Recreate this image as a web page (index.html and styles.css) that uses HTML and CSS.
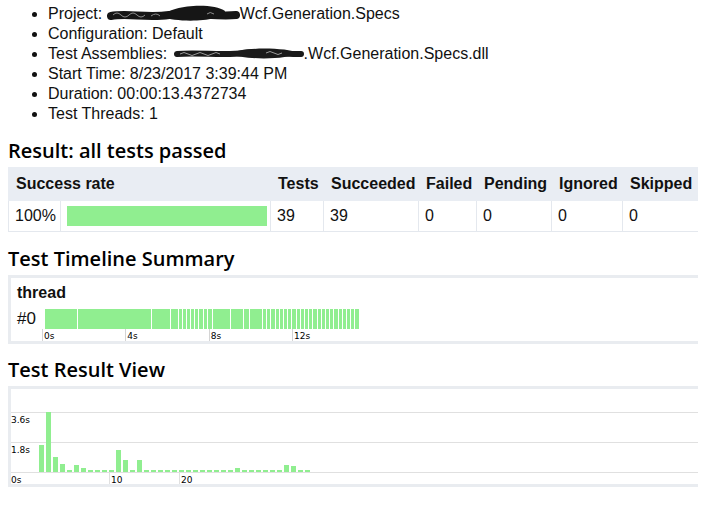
FILE: index.html
```html
<!DOCTYPE html>
<html lang="en">
<head>
<meta charset="utf-8">
<title>Test Report</title>
<link rel="stylesheet" href="styles.css">
</head>
<body>
<ul class="info">
  <li>Project: <svg class="redact" width="133" height="20" viewBox="0 0 133 20" aria-hidden="true"><path d="M4 12 C 20 9, 40 14, 62 11 S 110 13, 129 11" stroke="#161616" stroke-width="8" fill="none" stroke-linecap="round"/><path d="M56 13 C 60 1, 106 -2, 118 7 C 118 18, 70 19, 56 13 Z" fill="#161616"/><path d="M6 11 q4 -4 8 0 t8 0 t8 0 t8 0 M44 12 q5 -4 9 0 M100 10 q3 -3 7 0" stroke="#8c8c8c" stroke-width="1" fill="none"/></svg>Wcf.Generation.Specs</li>
  <li>Configuration: Default</li>
  <li>Test Assemblies: <svg class="redact r2" width="130" height="20" viewBox="0 0 130 20" aria-hidden="true"><path d="M3 10 C 25 8, 50 12, 70 9 S 110 11, 127 10" stroke="#1a1a1a" stroke-width="6" fill="none" stroke-linecap="round"/><path d="M56 10 C 64 3, 112 3, 124 9 C 114 16, 70 16, 56 10 Z" fill="#1a1a1a"/><path d="M6 10 q4 -3 8 0 t8 0 t8 0 t8 0 t8 0 M92 9 q4 -3 8 0 t8 0" stroke="#9a9a9a" stroke-width="1" fill="none"/></svg>.Wcf.Generation.Specs.dll</li>
  <li>Start Time: 8/23/2017 3:39:44 PM</li>
  <li>Duration: 00:00:13.4372734</li>
  <li>Test Threads: 1</li>
</ul>

<h2>Result: all tests passed</h2>
<table class="summary">
  <colgroup>
    <col class="c-rate"><col class="c-bar"><col class="c-tests"><col class="c-succ"><col class="c-fail"><col class="c-pend"><col class="c-ign"><col class="c-skip">
  </colgroup>
  <thead>
    <tr><th colspan="2">Success rate</th><th>Tests</th><th>Succeeded</th><th>Failed</th><th>Pending</th><th>Ignored</th><th>Skipped</th></tr>
  </thead>
  <tbody>
    <tr><td>100%</td><td><div class="rate-bar"></div></td><td>39</td><td>39</td><td>0</td><td>0</td><td>0</td><td>0</td></tr>
  </tbody>
</table>

<h2>Test Timeline Summary</h2>
<div class="panel timeline">
  <div class="thread-title">thread</div>
  <div class="thread-row">
    <span class="thread-id">#0</span>
    <div class="track">
      <span class="seg" style="width:33px"></span><span class="seg" style="width:74px"></span><span class="seg" style="width:19px"></span><span class="seg" style="width:8px"></span><span class="seg" style="width:4px"></span><span class="seg" style="width:4px"></span><span class="seg" style="width:4px"></span><span class="seg" style="width:4px"></span><span class="seg" style="width:4px"></span><span class="seg" style="width:5px"></span><span class="seg" style="width:4px"></span><span class="seg" style="width:5px"></span><span class="seg" style="width:18px"></span><span class="seg" style="width:13px"></span><span class="seg" style="width:6px"></span><span class="seg" style="width:13px"></span><span class="seg" style="width:4px"></span><span class="seg" style="width:4px"></span><span class="seg" style="width:5px"></span><span class="seg" style="width:4px"></span><span class="seg" style="width:4px"></span><span class="seg" style="width:4px"></span><span class="seg" style="width:4px"></span><span class="seg" style="width:5px"></span><span class="seg" style="width:4px"></span><span class="seg" style="width:4px"></span><span class="seg" style="width:4px"></span><span class="seg" style="width:4px"></span><span class="seg" style="width:5px"></span><span class="seg" style="width:4px"></span><span class="seg" style="width:4px"></span><span class="seg" style="width:4px"></span><span class="seg" style="width:4px"></span><span class="seg" style="width:5px"></span><span class="seg" style="width:4px"></span><span class="seg" style="width:4px"></span><span class="seg" style="width:4px"></span><span class="seg" style="width:4px"></span><span class="seg" style="width:4px"></span>
    </div>
  </div>
  <div class="tl-axis">
    <span class="tick">0s</span><span class="tick">4s</span><span class="tick">8s</span><span class="tick">12s</span>
  </div>
</div>

<h2 class="h-chart">Test Result View</h2>
<div class="panel chart">
  <div class="plot">
    <div class="grid-row g1"></div>
    <div class="grid-row g2"><span class="ylabel">3.6s</span></div>
    <div class="grid-row g3"><span class="ylabel">1.8s</span></div>
    <div class="bars">
      <span class="bar" style="height:27px"></span><span class="bar" style="height:60px"></span><span class="bar" style="height:15px"></span><span class="bar" style="height:8px"></span><span class="bar" style="height:2px"></span><span class="bar" style="height:7px"></span><span class="bar" style="height:4px"></span><span class="bar" style="height:2px"></span><span class="bar" style="height:2px"></span><span class="bar" style="height:2px"></span><span class="bar" style="height:2px"></span><span class="bar" style="height:22px"></span><span class="bar" style="height:12px"></span><span class="bar" style="height:2px"></span><span class="bar" style="height:12px"></span><span class="bar" style="height:2px"></span><span class="bar" style="height:2px"></span><span class="bar" style="height:2px"></span><span class="bar" style="height:2px"></span><span class="bar" style="height:2px"></span><span class="bar" style="height:2px"></span><span class="bar" style="height:2px"></span><span class="bar" style="height:2px"></span><span class="bar" style="height:2px"></span><span class="bar" style="height:2px"></span><span class="bar" style="height:2px"></span><span class="bar" style="height:2px"></span><span class="bar" style="height:2px"></span><span class="bar" style="height:4px"></span><span class="bar" style="height:2px"></span><span class="bar" style="height:2px"></span><span class="bar" style="height:2px"></span><span class="bar" style="height:2px"></span><span class="bar" style="height:2px"></span><span class="bar" style="height:2px"></span><span class="bar" style="height:7px"></span><span class="bar" style="height:6px"></span><span class="bar" style="height:2px"></span><span class="bar" style="height:2px"></span>
    </div>
  </div>
  <div class="xaxis">
    <span class="y0">0s</span><span class="xtick first"></span><span class="xtick">10</span><span class="xtick">20</span>
  </div>
</div>
</body>
</html>
```

FILE: styles.css
```css
body {
  margin: 4px 8px 8px;
  font-family: "Liberation Sans", Arial, sans-serif;
  font-size: 16px;
  line-height: 20px;
  color: #111;
  background: #fff;
}

.info {
  margin: 0 0 1px;
  padding-left: 40px;
}

.redact {
  vertical-align: top;
}

.redact.r2 {
  margin-left: 2px;
}

h2 {
  font-family: "Open Sans", "Noto Sans", sans-serif;
  font-weight: 600;
  font-size: 20px;
  line-height: 24px;
  margin: 15px 0 4px;
  color: #000;
}

h2.h-chart {
  margin-top: 14px;
}

/* summary table */
.summary {
  width: 100%;
  border-collapse: collapse;
  table-layout: fixed;
}

.c-rate { width: 52px; }
.c-bar { width: 210px; }
.c-tests { width: 53px; }
.c-succ { width: 95px; }
.c-fail { width: 58px; }
.c-pend { width: 75px; }
.c-ign { width: 71px; }
.c-skip { width: 76px; }

.summary th {
  background: #e9edf3;
  border: 1px solid #e9edf3;
  text-align: left;
  font-weight: bold;
  padding: 6px 7px;
  white-space: nowrap;
}

.summary td {
  border: 1px solid #e4e8ee;
  padding: 5px 6px;
  vertical-align: middle;
}

.rate-bar {
  width: 200px;
  height: 20px;
  background: #90ee90;
}

/* panels: they run on past the right edge of the window */
.panel {
  box-sizing: border-box;
  width: calc(100% + 8px);
  border: 3px solid #e9ecf0;
  border-right: none;
}

.timeline {
  padding: 6px 6px 0;
}

.thread-title {
  font-weight: bold;
  line-height: 18px;
  margin-bottom: 7px;
}

.thread-row {
  display: flex;
  height: 20px;
}

.thread-id {
  width: 25px;
  flex: none;
  font-size: 17px;
}

.track {
  display: flex;
  height: 20px;
  padding-left: 3px;
}

.seg {
  display: block;
  height: 20px;
  background: #90ee90;
  border-right: 1px solid #fff;
  box-sizing: border-box;
}

.seg:last-child {
  border-right: none;
}

.tl-axis {
  display: flex;
  height: 12px;
  padding-left: 25px;
}

.tick {
  flex: none;
  width: 83.33px;
  box-sizing: border-box;
  border-left: 1px solid #d4d4d4;
  padding: 2px 0 0 1px;
  font-family: "DejaVu Sans", Verdana, sans-serif;
  font-size: 9px;
  line-height: 10px;
  color: #000;
}

/* chart */
.plot {
  display: grid;
  grid-template-columns: 1fr;
  grid-template-rows: 23px 30px 30px;
  border-bottom: 1px solid #e0e0e0;
}

.grid-row {
  grid-column: 1;
}

.g1 { grid-row: 1; }
.g2 { grid-row: 2; border-top: 1px solid #e0e0e0; }
.g3 { grid-row: 3; border-top: 1px solid #e0e0e0; }

.ylabel,
.y0,
.xtick {
  font-family: "DejaVu Sans", Verdana, sans-serif;
  font-size: 9px;
  line-height: 10px;
  color: #000;
}

.ylabel {
  display: block;
  padding-top: 2px;
}

.bars {
  grid-column: 1;
  grid-row: 1 / 4;
  display: flex;
  align-items: flex-end;
  gap: 2px;
  padding-left: 28px;
}

.bar {
  display: block;
  width: 5px;
  background: #90ee90;
}

.xaxis {
  display: flex;
  height: 11px;
}

.y0 {
  width: 28px;
  flex: none;
  padding-top: 2px;
}

.xtick {
  flex: none;
  width: 70px;
  box-sizing: border-box;
  border-left: 1px solid #e0e0e0;
  padding: 2px 0 0 1px;
}

.xtick.first {
  border-left-color: transparent;
}
```
